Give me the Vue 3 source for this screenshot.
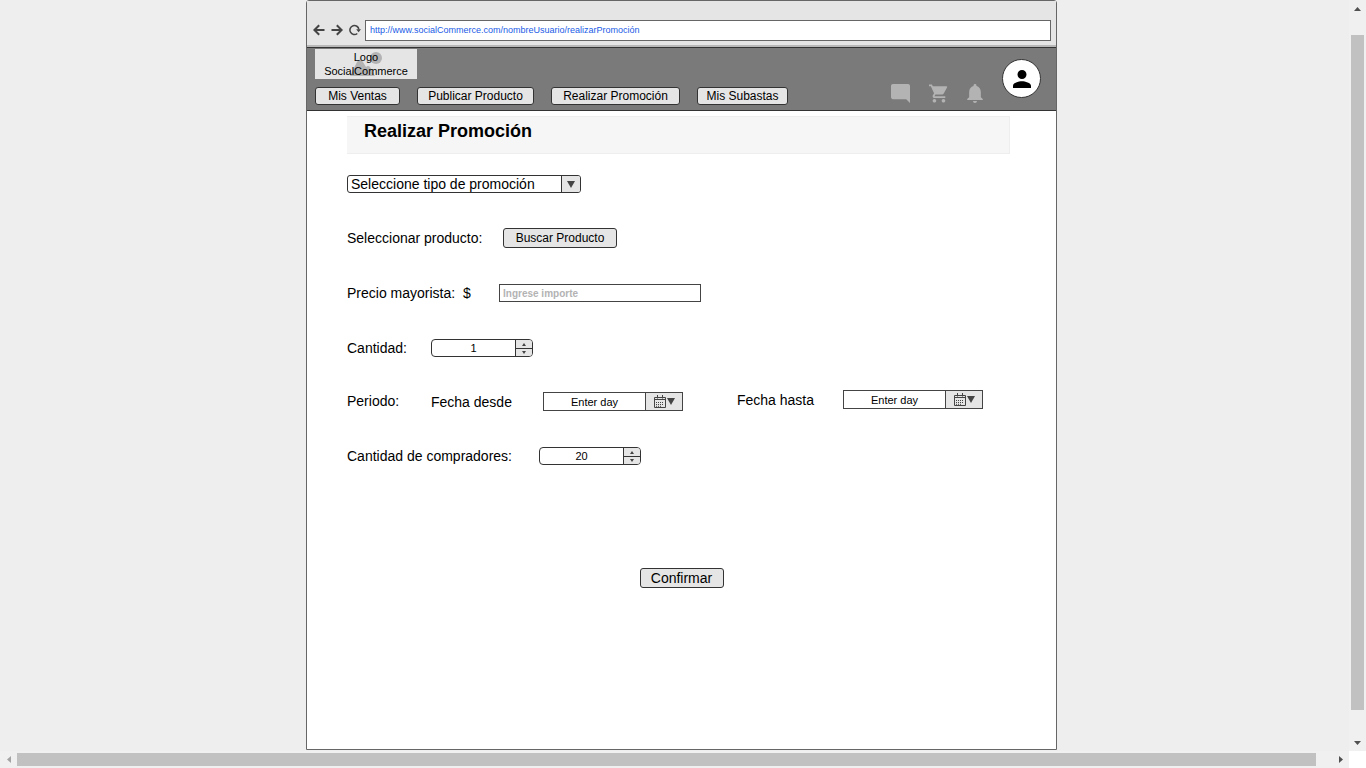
<script setup>
import { ref } from 'vue'

const url = ref('http://www.socialCommerce.com/nombreUsuario/realizarPromoción')
const sections = ['Mis Ventas', 'Publicar Producto', 'Realizar Promoción', 'Mis Subastas']
const amount = ref('')
const quantity = ref(1)
const buyers = ref(20)
const from = ref('Enter day')
const until = ref('Enter day')
</script>

<template>
  <div class="viewport">
    <div class="canvas">
      <div class="window">
        <div class="chrome">
          <button class="tool" aria-label="Atrás">
            <svg width="12" height="12" viewBox="0 0 12 12"><path d="M11.5 6H1.5M6.2 1.2L1.4 6l4.8 4.8" /></svg>
          </button>
          <button class="tool" aria-label="Adelante">
            <svg width="12" height="12" viewBox="0 0 12 12"><path d="M.5 6h10M5.8 1.2L10.6 6l-4.8 4.8" /></svg>
          </button>
          <button class="tool" aria-label="Recargar">
            <svg width="12" height="12" viewBox="0 0 12 12">
              <path class="thin" d="M8.300 9.500A4.500 4.500 0 1 1 9.900 5.500" />
              <path class="solid" d="M7.200 5.200h4.800L9.600 8.200z" />
            </svg>
          </button>
          <input v-model="url" class="address" type="text" aria-label="Dirección" />
        </div>

        <header class="header">
          <div class="brand">
            <a class="logo" href="#">
              <svg class="logo-art" width="32" height="24" viewBox="0 0 32 24">
                <circle cx="26" cy="6" r="6" />
                <path d="M0 24L7 10q3-5 6 0l3 5q2-2 4 0l5 9z" />
              </svg>
              <span class="logo-text">Logo<br />SocialCommerce</span>
            </a>
            <nav class="nav">
              <button v-for="name in sections" :key="name" class="btn">{{ name }}</button>
            </nav>
          </div>
          <div class="actions">
            <button class="action" aria-label="Mensajes">
              <svg width="19" height="19" viewBox="2 2 20 20"><path d="M22 4c0-1.1-.9-2-2-2H4c-1.1 0-2 .9-2 2v12c0 1.1.9 2 2 2h14l4 4z" /></svg>
            </button>
            <button class="action" aria-label="Carrito">
              <svg width="19" height="19" viewBox="1 2 21 20"><path d="M7 18c-1.1 0-1.99.9-1.99 2S5.900 22 7 22s2-.9 2-2-.9-2-2-2zM1 2v2h2l3.600 7.590-1.350 2.450c-.16.28-.25.61-.25.96 0 1.100.9 2 2 2h12v-2H7.420c-.14 0-.25-.11-.25-.25l.03-.12.9-1.630h7.450c.75 0 1.410-.41 1.750-1.030l3.580-6.490A1 1 0 0 0 20 4H5.210l-.94-2H1zm16 16c-1.100 0-1.990.9-1.990 2s.89 2 1.990 2 2-.9 2-2-.9-2-2-2z" /></svg>
            </button>
            <button class="action" aria-label="Notificaciones">
              <svg width="16" height="19" viewBox="4 2.500 16 19.500"><path d="M12 22c1.100 0 2-.9 2-2h-4c0 1.100.89 2 2 2zm6-6v-5c0-3.070-1.640-5.640-4.500-6.320V4a1.500 1.500 0 0 0-3 0v.68C7.630 5.360 6 7.920 6 11v5l-2 2v1h16v-1l-2-2z" /></svg>
            </button>
          </div>
          <button class="avatar" aria-label="Perfil">
            <svg width="18" height="18" viewBox="4 4 16 16"><path d="M12 12a4 4 0 1 0 0-8 4 4 0 0 0 0 8zm0 2c-2.670 0-8 1.340-8 4v2h16v-2c0-2.660-5.330-4-8-4z" /></svg>
          </button>
        </header>

        <main class="main">
          <div class="banner"><h1>Realizar Promoción</h1></div>

          <form class="form" @submit.prevent>
            <div class="row type">
              <div class="picker">
                <select aria-label="Tipo de promoción">
                  <option>Seleccione tipo de promoción</option>
                </select>
                <span class="picker-arrow"><svg width="8" height="7" viewBox="0 0 8 7"><path d="M0 0h8L4 7z" /></svg></span>
              </div>
            </div>

            <div class="row">
              <label class="product-label" for="product">Seleccionar producto:</label>
              <button id="product" class="btn search" type="button">Buscar Producto</button>
            </div>

            <div class="row">
              <label class="price-label" for="amount">Precio mayorista:&nbsp; $</label>
              <input id="amount" v-model="amount" class="amount" type="text" placeholder="Ingrese importe" />
            </div>

            <div class="row">
              <label class="short-label" for="quantity">Cantidad:</label>
              <div class="stepper">
                <input id="quantity" v-model.number="quantity" type="number" />
                <div class="steps">
                  <button type="button" aria-label="Más" @click="quantity++"><svg width="4" height="3" viewBox="0 0 4 3"><path d="M0 3h4L2 0z" /></svg></button>
                  <button type="button" aria-label="Menos" @click="quantity--"><svg width="4" height="3" viewBox="0 0 4 3"><path d="M0 0h4L2 3z" /></svg></button>
                </div>
              </div>
            </div>

            <div class="row period">
              <span class="short-label">Periodo:</span>
              <div class="date-group">
                <label class="from-label" for="from">Fecha desde</label>
                <div class="date">
                  <input id="from" v-model="from" type="text" />
                  <button type="button" aria-label="Abrir calendario">
                    <svg width="21" height="13" viewBox="0 0 21 13">
                      <path class="line" d="M.5 2.500h11v10H.5zM.5 4.500h11M3.500 0v3.500M8.500 0v3.500" />
                      <path class="dots" d="M2 7.500h8M2 9.500h8M2 11.300h6" />
                      <path d="M13 3h8l-4 7z" />
                    </svg>
                  </button>
                </div>
              </div>
              <div class="date-group until">
                <label class="until-label" for="until">Fecha hasta</label>
                <div class="date">
                  <input id="until" v-model="until" type="text" />
                  <button type="button" aria-label="Abrir calendario">
                    <svg width="21" height="13" viewBox="0 0 21 13">
                      <path class="line" d="M.5 2.500h11v10H.5zM.5 4.500h11M3.500 0v3.500M8.500 0v3.500" />
                      <path class="dots" d="M2 7.500h8M2 9.500h8M2 11.300h6" />
                      <path d="M13 3h8l-4 7z" />
                    </svg>
                  </button>
                </div>
              </div>
            </div>

            <div class="row">
              <label class="buyers-label" for="buyers">Cantidad de compradores:</label>
              <div class="stepper">
                <input id="buyers" v-model.number="buyers" type="number" />
                <div class="steps">
                  <button type="button" aria-label="Más" @click="buyers++"><svg width="4" height="3" viewBox="0 0 4 3"><path d="M0 3h4L2 0z" /></svg></button>
                  <button type="button" aria-label="Menos" @click="buyers--"><svg width="4" height="3" viewBox="0 0 4 3"><path d="M0 0h4L2 3z" /></svg></button>
                </div>
              </div>
            </div>

            <button class="btn confirm" type="submit">Confirmar</button>
          </form>
        </main>
      </div>
    </div>

    <div class="bar vertical">
      <button aria-label="Subir"><svg width="7" height="4" viewBox="0 0 7 4"><path d="M0 4h7L3.500 0z" /></svg></button>
      <div class="thumb"></div>
      <button aria-label="Bajar"><svg width="7" height="4" viewBox="0 0 7 4"><path d="M0 0h7L3.500 4z" /></svg></button>
    </div>
    <div class="bar horizontal">
      <button class="dim" aria-label="Izquierda"><svg width="4" height="7" viewBox="0 0 4 7"><path d="M4 0v7L0 3.500z" /></svg></button>
      <div class="thumb"></div>
      <button aria-label="Derecha"><svg width="4" height="7" viewBox="0 0 4 7"><path d="M0 0v7l4-3.500z" /></svg></button>
    </div>
  </div>
</template>

<style>
body {
  margin: 0;
}
</style>

<style scoped>
* {
  box-sizing: border-box;
}
button,
input,
select {
  margin: 0;
  padding: 0;
  border: 0;
  border-radius: 0;
  background: none;
  color: inherit;
  font: inherit;
  outline: 0;
}
svg {
  display: block;
}
.viewport {
  display: grid;
  grid-template-columns: 1fr 17px;
  grid-template-rows: 1fr 17px;
  height: 100vh;
  font-family: "Liberation Sans", Arial, sans-serif;
  font-size: 14px;
  color: #000;
}
.canvas {
  display: flex;
  justify-content: center;
  padding: 0 0 1px 14px;
  background: #eee;
}
.window {
  display: flex;
  flex-direction: column;
  width: 100%;
  max-width: 751px;
  border: 1px solid #666;
  border-radius: 3px 3px 0 0;
  background: #fff;
}
.chrome {
  display: flex;
  align-items: center;
  gap: 6px;
  height: 46px;
  padding: 16px 5px 2px 6px;
  border-bottom: 2px solid #b8b8b8;
  background: #e5e5e5;
}
.tool path {
  fill: none;
  stroke: #444;
  stroke-width: 2;
}
.tool .thin {
  stroke-width: 1.5;
}
.tool .solid {
  fill: #444;
  stroke: none;
}
.address {
  flex: 1;
  min-width: 0;
  height: 21px;
  margin-left: -2px;
  padding: 0 4px;
  border: 1px solid #666;
  background: #fff;
  color: #1a5ce6;
  font-size: 9px;
}
.header {
  display: flex;
  height: 64px;
  padding: 1px 15px 5px 8px;
  border-top: 1px solid #333;
  border-bottom: 1px solid #333;
  background: #7a7a7a;
}
.brand {
  display: flex;
  flex-direction: column;
  justify-content: space-between;
  align-items: flex-start;
}
.logo {
  display: grid;
  place-items: center;
  width: 102px;
  height: 30px;
  background: #e5e5e5;
  color: #000;
  font-size: 11px;
  line-height: 14px;
  text-align: center;
  text-decoration: none;
}
.logo-art,
.logo-text {
  grid-area: 1 / 1;
}
.logo-art {
  fill: #b3b3b3;
}
.nav {
  display: grid;
  grid-template-columns: 85px 117px 129px 91px;
  gap: 17px;
}
.btn {
  height: 18px;
  border: 1px solid #333;
  border-radius: 3px;
  background: #e5e5e5;
  font-size: 12px;
  line-height: 16px;
  white-space: nowrap;
}
.actions {
  display: flex;
  align-items: flex-end;
  gap: 19px;
  margin-left: auto;
  padding-bottom: 2px;
}
.action {
  color: #b3b3b3;
}
.action svg,
.avatar svg,
.bar svg {
  fill: currentColor;
}
.avatar {
  display: grid;
  place-items: center;
  width: 39px;
  height: 39px;
  margin: 10px 0 0 19px;
  border: 1px solid #333;
  border-radius: 50%;
  background: #fff;
}
.main {
  flex: 1;
  padding: 5px 40px 0;
}
.banner {
  height: 38px;
  margin-right: 6px;
  padding: 4px 17px;
  border: 1px solid #eee;
  border-left: 0;
  background: #f6f6f6;
}
h1 {
  margin: 0;
  font-size: 18px;
  line-height: 20px;
}
.form {
  display: flex;
  flex-direction: column;
  padding-top: 20px;
}
.row {
  display: flex;
  align-items: center;
  height: 20px;
  margin-bottom: 35px;
  white-space: nowrap;
}
.type {
  margin-bottom: 34px;
}
.picker {
  display: grid;
  grid-template-columns: 1fr 19px;
  width: 234px;
  height: 18px;
  border: 1px solid #333;
  border-radius: 3px;
  background: #fff;
  overflow: hidden;
}
.picker select {
  grid-area: 1 / 1 / 2 / 3;
  appearance: none;
  padding-left: 3px;
}
.picker-arrow {
  grid-area: 1 / 2;
  display: grid;
  place-items: center;
  border-left: 1px solid #333;
  background: #e5e5e5;
  fill: #444;
  pointer-events: none;
}
.product-label {
  width: 156px;
}
.search {
  width: 114px;
  height: 20px;
}
.price-label {
  width: 152px;
}
.amount {
  width: 202px;
  height: 18px;
  padding: 0 3px;
  border: 1px solid #444;
  background: #fff;
  font-size: 11px;
}
.amount::placeholder {
  color: #b3b3b3;
  font-size: 10px;
  font-weight: bold;
  opacity: 1;
}
.short-label {
  width: 84px;
}
.buyers-label {
  width: 192px;
}
.stepper {
  display: flex;
  width: 102px;
  height: 18px;
  border: 1px solid #333;
  border-radius: 4px;
  overflow: hidden;
  font-size: 11px;
}
.stepper input {
  flex: 1;
  min-width: 0;
  appearance: textfield;
  text-align: center;
}
.stepper input::-webkit-inner-spin-button {
  appearance: none;
  display: none;
}
.steps {
  display: grid;
  grid-template-rows: 1fr 1fr;
  width: 17px;
  border-left: 1px solid #333;
  background: #e5e5e5;
}
.steps button {
  display: grid;
  place-items: center;
  fill: #444;
}
.steps button + button {
  border-top: 1px solid #333;
}
.period {
  align-items: flex-end;
  height: 21px;
  margin-top: -3px;
}
.period .short-label {
  line-height: 20px;
}
.date-group {
  display: flex;
  align-items: center;
}
.until {
  align-self: flex-start;
  margin-left: 54px;
}
.from-label {
  width: 112px;
}
.until-label {
  width: 106px;
}
.date {
  display: flex;
  width: 140px;
  height: 19px;
  border: 1px solid #444;
  font-size: 11px;
}
.date input {
  flex: 1;
  min-width: 0;
  text-align: center;
}
.date button {
  display: grid;
  place-items: center;
  width: 37px;
  border-left: 1px solid #444;
  background: #e5e5e5;
  fill: #444;
}
.line {
  fill: none;
  stroke: #444;
}
.dots {
  fill: none;
  stroke: #444;
  stroke-dasharray: 1 1;
}
.confirm {
  align-self: center;
  width: 84px;
  height: 20px;
  margin-top: 67px;
  font-size: 14px;
}
.bar {
  display: flex;
  background: #f0f0f0;
  color: #505050;
}
.bar button {
  display: grid;
  place-items: center;
  flex: none;
  width: 17px;
  height: 17px;
}
.bar .dim {
  color: #a3a3a3;
}
.thumb {
  flex: 1;
  background: #c1c1c1;
}
.vertical {
  flex-direction: column;
}
.vertical .thumb {
  margin: 18px 2px 24px;
}
.horizontal .thumb {
  margin: 2px 16px 2px 0;
}
</style>
